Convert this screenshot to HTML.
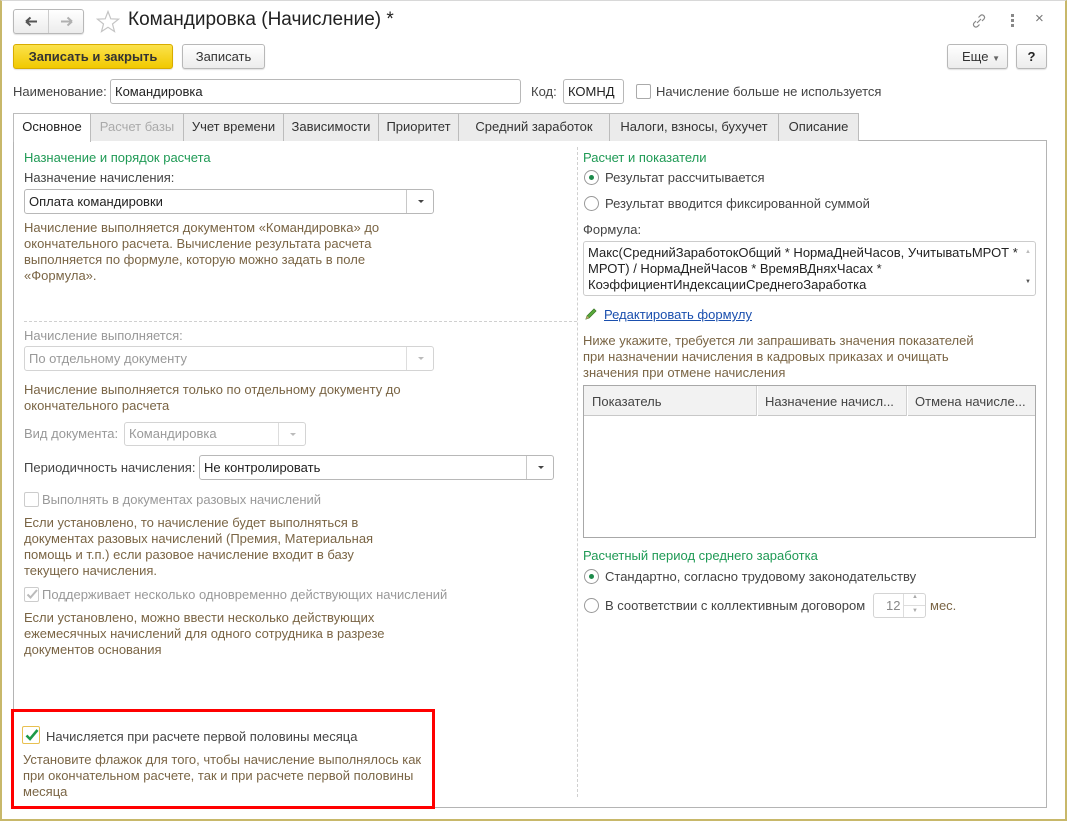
<!DOCTYPE html>
<html><head><meta charset="utf-8">
<style>
*{box-sizing:border-box;margin:0;padding:0}
body{width:1067px;height:821px;position:relative;background:#fff;font-family:"Liberation Sans",Arial,sans-serif;font-size:13px;color:#333;overflow:hidden}
.a{position:absolute;white-space:nowrap}
.frame{position:absolute;left:0;top:0;width:1067px;height:821px;border-left:2px solid #c8b86a;border-right:2px solid #c8b86a;border-bottom:2px solid #c8b86a;border-top:1px solid #d8d8d8}
.btn{position:absolute;border:1px solid #b8b8b8;border-radius:3px;background:linear-gradient(#fff,#ececec);text-align:center;line-height:23px;color:#333;box-shadow:0 1px 1px rgba(0,0,0,.12)}
.inp{position:absolute;border:1px solid #b8b8b8;border-radius:3px;background:#fff;line-height:24px;padding-left:4px;color:#222}
.dd{position:absolute;top:0;right:0;bottom:0;width:27px;border-left:1px solid #c8c8c8}
.dd:after{content:"";position:absolute;left:11px;top:10px;border-left:3px solid transparent;border-right:3px solid transparent;border-top:3px solid #444}
.dis{color:#999}
.dis .dd:after{border-top-color:#bbb}
.dis.inp{border-color:#d4d4d4}
.tab{position:absolute;top:113px;height:28px;border:1px solid #bcbcbc;border-bottom:none;background:#ebebeb;text-align:center;line-height:26px;color:#333}
.g{color:#1f9a55}
.d{color:#7a6545}
.lbl{color:#444}
.cb{position:absolute;width:15px;height:15px;border:1px solid #aaa;border-radius:2px;background:#fff}
.rb{position:absolute;width:15px;height:15px;border:1px solid #999;border-radius:50%;background:#fff}
.rb.on:after{content:"";position:absolute;left:4px;top:4px;width:5px;height:5px;border-radius:50%;background:#1d8a4a}
</style></head><body>
<div class="frame"></div>

<div class="btn" style="left:13px;top:9px;width:71px;height:25px"></div>
<div class="a" style="left:48px;top:10px;width:1px;height:23px;background:#ccc"></div>
<svg class="a" style="left:25px;top:16px" width="13" height="11"><path d="M1 5.5H12M1 5.5L5.5 1.5M1 5.5L5.5 9.5" stroke="#555" stroke-width="2" fill="none"/></svg>
<svg class="a" style="left:60px;top:16px" width="13" height="11"><path d="M1 5.5H12M12 5.5L7.5 1.5M12 5.5L7.5 9.5" stroke="#b0b0b0" stroke-width="2" fill="none"/></svg>
<svg class="a" style="left:96px;top:10px" width="24" height="23"><path d="M12 1.5L14.8 8.8 22.5 9.2 16.5 14 18.5 21.5 12 17.3 5.5 21.5 7.5 14 1.5 9.2 9.2 8.8Z" fill="none" stroke="#c4c4c4" stroke-width="1.2"/></svg>
<div class="a" style="left:128px;top:9px;font-size:19px;color:#222">Командировка (Начисление) *</div>
<svg class="a" style="left:970px;top:12px" width="18" height="18"><path d="M7 11L11 7M8.5 5.5L10.5 3.5a2.5 2.5 0 0 1 3.5 3.5L12 9M9.5 12.5L7.5 14.5a2.5 2.5 0 0 1-3.5-3.5L6 9" stroke="#888" stroke-width="1.2" fill="none"/></svg>
<div class="a" style="left:1011px;top:14px;width:3px;height:3px;background:#888;box-shadow:0 5px 0 #888,0 10px 0 #888"></div>
<div class="a" style="left:1035px;top:10px;font-size:15px;color:#777">×</div>

<div class="btn" style="left:13px;top:44px;width:160px;height:25px;background:linear-gradient(#fbe24c,#f1c900);border-color:#d8ac00;font-weight:bold;color:#333">Записать и закрыть</div>
<div class="btn" style="left:182px;top:44px;width:83px;height:25px">Записать</div>
<div class="btn" style="left:947px;top:44px;width:61px;height:25px;text-align:left;padding-left:14px">Еще <span style="font-size:8px;color:#666">▼</span></div>
<div class="btn" style="left:1016px;top:44px;width:31px;height:25px;font-weight:bold;color:#222">?</div>

<div class="a lbl" style="left:13px;top:84px">Наименование:</div>
<div class="inp" style="left:110px;top:79px;width:411px;height:25px">Командировка</div>
<div class="a lbl" style="left:531px;top:84px">Код:</div>
<div class="inp" style="left:563px;top:79px;width:61px;height:25px">КОМНД</div>
<div class="cb" style="left:636px;top:84px"></div>
<div class="a lbl" style="left:656px;top:84px">Начисление больше не используется</div>

<div class="a" style="left:13px;top:140px;width:1034px;height:668px;border:1px solid #b4b4b4"></div>
<div class="tab" style="left:13px;width:78px;background:#fff;height:29px;color:#222">Основное</div>
<div class="tab" style="left:90px;width:94px;color:#aaa">Расчет базы</div>
<div class="tab" style="left:183px;width:101px">Учет времени</div>
<div class="tab" style="left:283px;width:96px">Зависимости</div>
<div class="tab" style="left:378px;width:81px">Приоритет</div>
<div class="tab" style="left:458px;width:152px">Средний заработок</div>
<div class="tab" style="left:609px;width:170px">Налоги, взносы, бухучет</div>
<div class="tab" style="left:778px;width:81px">Описание</div>

<div class="a" style="left:577px;top:147px;height:650px;border-left:1px dashed #d0d0d0"></div>
<div class="a" style="left:24px;top:321px;width:553px;border-top:1px dashed #d0d0d0"></div>

<div class="a g" style="left:24px;top:150px">Назначение и порядок расчета</div>
<div class="a lbl" style="left:24px;top:170px">Назначение начисления:</div>
<div class="inp" style="left:24px;top:189px;width:410px;height:25px">Оплата командировки<div class="dd"></div></div>
<div class="a d" style="left:24px;top:220px;line-height:16px">Начисление выполняется документом «Командировка» до<br>окончательного расчета. Вычисление результата расчета<br>выполняется по формуле, которую можно задать в поле<br>«Формула».</div>

<div class="a dis" style="left:24px;top:328px">Начисление выполняется:</div>
<div class="inp dis" style="left:24px;top:346px;width:410px;height:25px">По отдельному документу<div class="dd" style="border-left-color:#ddd"></div></div>
<div class="a d" style="left:24px;top:382px;line-height:16px">Начисление выполняется только по отдельному документу до<br>окончательного расчета</div>
<div class="a dis" style="left:24px;top:426px">Вид документа:</div>
<div class="inp dis" style="left:124px;top:422px;width:182px;height:24px;line-height:22px">Командировка<div class="dd" style="border-left-color:#ddd"></div></div>
<div class="a lbl" style="left:24px;top:460px">Периодичность начисления:</div>
<div class="inp" style="left:199px;top:455px;width:355px;height:25px">Не контролировать<div class="dd"></div></div>

<div class="cb" style="left:24px;top:492px;border-color:#ccc"></div>
<div class="a dis" style="left:42px;top:492px">Выполнять в документах разовых начислений</div>
<div class="a d" style="left:24px;top:515px;line-height:16px">Если установлено, то начисление будет выполняться в<br>документах разовых начислений (Премия, Материальная<br>помощь и т.п.) если разовое начисление входит в базу<br>текущего начисления.</div>
<div class="cb" style="left:24px;top:587px;border-color:#ccc"></div>
<svg class="a" style="left:25px;top:587px" width="14" height="14"><path d="M2.5 7.5L5.5 10.5 12 3" stroke="#bbb" stroke-width="2" fill="none"/></svg>
<div class="a dis" style="left:42px;top:587px">Поддерживает несколько одновременно действующих начислений</div>
<div class="a d" style="left:24px;top:610px;line-height:16px">Если установлено, можно ввести несколько действующих<br>ежемесячных начислений для одного сотрудника в разрезе<br>документов основания</div>

<div class="a" style="left:11px;top:709px;width:424px;height:100px;border:3px solid #f00"></div>
<div class="cb" style="left:22px;top:726px;width:18px;height:18px;border-color:#e8c050"></div>
<svg class="a" style="left:24px;top:727px" width="16" height="16"><path d="M2.5 8.5L6 12 13.5 3" stroke="#1d9a48" stroke-width="2.6" fill="none"/></svg>
<div class="a lbl" style="left:46px;top:729px">Начисляется при расчете первой половины месяца</div>
<div class="a d" style="left:23px;top:752px;line-height:16px">Установите флажок для того, чтобы начисление выполнялось как<br>при окончательном расчете, так и при расчете первой половины<br>месяца</div>

<div class="a g" style="left:583px;top:150px">Расчет и показатели</div>
<div class="rb on" style="left:584px;top:170px"></div>
<div class="a lbl" style="left:605px;top:170px">Результат рассчитывается</div>
<div class="rb" style="left:584px;top:196px"></div>
<div class="a lbl" style="left:605px;top:196px">Результат вводится фиксированной суммой</div>
<div class="a lbl" style="left:583px;top:222px">Формула:</div>
<div class="a" style="left:583px;top:241px;width:453px;height:55px;border:1px solid #ccc;border-radius:3px;padding:3px 0 0 4px;line-height:16px;color:#222;white-space:nowrap">Макс(СреднийЗаработокОбщий * НормаДнейЧасов, УчитыватьМРОТ *<br>МРОТ) / НормаДнейЧасов * ВремяВДняхЧасах *<br>КоэффициентИндексацииСреднегоЗаработка</div>
<div class="a" style="left:1025px;top:249px;font-size:6px;color:#bbb">▲</div>
<div class="a" style="left:1025px;top:279px;font-size:6px;color:#555">▼</div>
<svg class="a" style="left:584px;top:307px" width="14" height="14"><path d="M2 12L3 9 10 2 12 4 5 11Z" fill="#5aab3a" stroke="#3c7a28" stroke-width=".8"/><path d="M2 12L3 9 5 11Z" fill="#c9a070"/></svg>
<div class="a" style="left:604px;top:307px;color:#1a4fae;text-decoration:underline">Редактировать формулу</div>
<div class="a d" style="left:583px;top:333px;line-height:16px">Ниже укажите, требуется ли запрашивать значения показателей<br>при назначении начисления в кадровых приказах и очищать<br>значения при отмене начисления</div>
<div class="a" style="left:583px;top:385px;width:453px;height:153px;border:1px solid #a8a8a8;background:#fff"></div>
<div class="a" style="left:584px;top:386px;width:451px;height:30px;background:#f2f2f2;border-bottom:1px solid #c8c8c8"></div>
<div class="a" style="left:756px;top:386px;height:30px;border-left:1px solid #d0d0d0;width:2px;border-right:1px solid #fff"></div>
<div class="a" style="left:906px;top:386px;height:30px;border-left:1px solid #d0d0d0;width:2px;border-right:1px solid #fff"></div>
<div class="a lbl" style="left:592px;top:394px">Показатель</div>
<div class="a lbl" style="left:765px;top:394px">Назначение начисл...</div>
<div class="a lbl" style="left:915px;top:394px">Отмена начисле...</div>

<div class="a g" style="left:583px;top:548px">Расчетный период среднего заработка</div>
<div class="rb on" style="left:584px;top:569px"></div>
<div class="a lbl" style="left:605px;top:569px">Стандартно, согласно трудовому законодательству</div>
<div class="rb" style="left:584px;top:598px"></div>
<div class="a lbl" style="left:605px;top:598px">В соответствии с коллективным договором</div>
<div class="a" style="left:873px;top:593px;width:53px;height:25px;border:1px solid #d4d4d4;border-radius:3px"></div>
<div class="a" style="left:886px;top:598px;color:#888">12</div>
<div class="a" style="left:903px;top:594px;height:23px;border-left:1px solid #ddd;width:22px"></div>
<div class="a" style="left:904px;top:605px;width:21px;border-top:1px solid #ddd"></div>
<div class="a" style="left:912px;top:594px;font-size:6px;color:#aaa">▲</div>
<div class="a" style="left:912px;top:608px;font-size:6px;color:#aaa">▼</div>
<div class="a d" style="left:930px;top:598px">мес.</div>
</body></html>
